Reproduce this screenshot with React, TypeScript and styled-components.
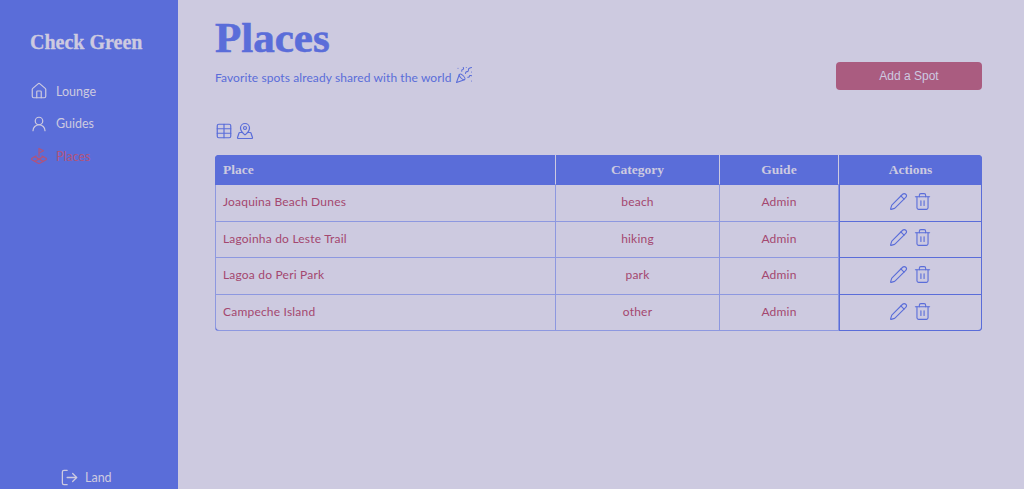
import React from 'react';
import styled, { createGlobalStyle } from 'styled-components';
import { House, UserRound, LandPlot, LogOut, PartyPopper, Table, MapPinned, Pencil, Trash2 } from 'lucide-react';

const BLUE = '#5a6dd9';
const PALE = '#cdcae0';
const ROSE = '#a4476f';
const BODY_FONT = "'Lato', 'Open Sans', sans-serif";
const TITLE_FONT = "'Liberation Serif', 'DejaVu Serif', serif";

const places = [
  { name: 'Joaquina Beach Dunes', category: 'beach', guide: 'Admin' },
  { name: 'Lagoinha do Leste Trail', category: 'hiking', guide: 'Admin' },
  { name: 'Lagoa do Peri Park', category: 'park', guide: 'Admin' },
  { name: 'Campeche Island', category: 'other', guide: 'Admin' },
];

const GlobalStyle = createGlobalStyle`
  html, body {
    margin: 0;
    padding: 0;
    height: 100%;
    background-color: ${PALE};
    font-family: ${BODY_FONT};
  }
`;

const App: React.FC = () => (
  <Page>
    <GlobalStyle />
    <Sidebar>
      <Brand>Check Green</Brand>
      <Nav>
        <NavItem>
          <House size={18} strokeWidth={1.6} />
          Lounge
        </NavItem>
        <NavItem>
          <UserRound size={18} strokeWidth={1.6} />
          Guides
        </NavItem>
        <NavItem $active>
          <LandPlot size={18} strokeWidth={1.6} />
          Places
        </NavItem>
      </Nav>
      <LandLink>
        <LogOut size={19} strokeWidth={1.6} />
        Land
      </LandLink>
    </Sidebar>
    <Main>
      <Title>Places</Title>
      <SubRow>
        <Subtitle>
          Favorite spots already shared with the world
          <PartyPopper size={18} strokeWidth={1.4} />
        </Subtitle>
        <AddButton>Add a Spot</AddButton>
      </SubRow>
      <ViewToggle>
        <Table size={18} strokeWidth={1.6} />
        <MapPinned size={18} strokeWidth={1.6} />
      </ViewToggle>
      <PlacesTable>
        <thead>
          <tr>
            <HeadCell $width={341} $align="left">Place</HeadCell>
            <HeadCell $width={164}>Category</HeadCell>
            <HeadCell $width={119}>Guide</HeadCell>
            <HeadCell>Actions</HeadCell>
          </tr>
        </thead>
        <tbody>
          {places.map((place) => (
            <tr key={place.name}>
              <Cell $align="left">{place.name}</Cell>
              <Cell>{place.category}</Cell>
              <Cell>{place.guide}</Cell>
              <ActionCell>
                <ActionIcons>
                  <Pencil size={19} strokeWidth={1.4} />
                  <Trash2 size={19} strokeWidth={1.4} />
                </ActionIcons>
              </ActionCell>
            </tr>
          ))}
        </tbody>
      </PlacesTable>
    </Main>
  </Page>
);

export default App;

const Page = styled.div`
  display: flex;
  height: 489px;
  overflow: hidden;
`;

const Sidebar = styled.aside`
  width: 178px;
  flex-shrink: 0;
  display: flex;
  flex-direction: column;
  box-sizing: border-box;
  padding: 30px 0 0 30px;
  background-color: ${BLUE};
  color: ${PALE};
`;

const Brand = styled.div`
  font-family: ${TITLE_FONT};
  font-size: 20px;
  font-weight: 700;
  line-height: 24px;
  -webkit-text-stroke: 0.3px ${PALE};
`;

const Nav = styled.nav`
  display: flex;
  flex-direction: column;
  gap: 13.5px;
  margin-top: 27.5px;
`;

const NavItem = styled.div<{ $active?: boolean }>`
  display: flex;
  align-items: center;
  gap: 8px;
  height: 19px;
  font-size: 12.5px;
  color: ${(props) => (props.$active ? '#b0547c' : PALE)};
`;

const LandLink = styled(NavItem)`
  margin-top: auto;
  margin-left: 30px;
  height: 24px;
  gap: 6px;
`;

const Main = styled.main`
  flex: 1;
  min-width: 0;
  box-sizing: border-box;
  padding: 16px 42px 0 37px;
`;

const Title = styled.h1`
  margin: 0;
  font-family: ${TITLE_FONT};
  font-size: 43px;
  font-weight: 700;
  line-height: 44px;
  color: ${BLUE};
  -webkit-text-stroke: 0.6px ${BLUE};
`;

const SubRow = styled.div`
  display: flex;
  align-items: center;
  justify-content: space-between;
  margin-top: 2px;
`;

const Subtitle = styled.p`
  display: flex;
  align-items: center;
  gap: 4px;
  margin: 0;
  padding-top: 3px;
  font-size: 12px;
  letter-spacing: 0.1px;
  color: ${BLUE};

  svg {
    margin-top: -6px;
  }
`;

const AddButton = styled.button`
  width: 146px;
  height: 28px;
  padding: 0;
  border: none;
  border-radius: 4px;
  background-color: #aa5c80;
  color: ${PALE};
  font-family: 'Liberation Sans', sans-serif;
  font-size: 12px;
`;

const ViewToggle = styled.div`
  display: flex;
  gap: 3px;
  margin-top: 32px;
  height: 18px;
  color: ${BLUE};
`;

const PlacesTable = styled.table`
  width: 767px;
  margin-top: 15px;
  border-collapse: separate;
  border-spacing: 0;
  table-layout: fixed;
  border-radius: 4px;
  overflow: hidden;
  box-shadow: inset 0 0 0 1px ${BLUE};
`;

const HeadCell = styled.th<{ $width?: number; $align?: string }>`
  width: ${(props) => (props.$width ? `${props.$width}px` : 'auto')};
  height: 30px;
  box-sizing: border-box;
  padding: 0 8px;
  border-right: 1px solid ${PALE};
  border-bottom: 1px solid ${BLUE};
  background-color: ${BLUE};
  color: ${PALE};
  font-family: ${TITLE_FONT};
  font-size: 13.5px;
  font-weight: 700;
  text-align: ${(props) => props.$align || 'center'};

  &:last-child {
    border-right: none;
  }
`;

const Cell = styled.td<{ $align?: string }>`
  height: 36.6px;
  box-sizing: border-box;
  padding: 0 8px 2px;
  border-right: 1px solid #8d98e0;
  border-bottom: 1px solid #8d98e0;
  color: ${ROSE};
  font-size: 12px;
  letter-spacing: 0.2px;
  text-align: ${(props) => props.$align || 'center'};

  &:first-child {
    border-left: 1px solid #8d98e0;
    padding-left: 7px;
  }
`;

const ActionCell = styled.td`
  box-sizing: border-box;
  padding: 0 0 3px;
  border-bottom: 1px solid ${BLUE};
  border-right: 1px solid ${BLUE};
  box-shadow: inset 1px 0 0 ${BLUE};
  color: ${BLUE};
`;

const ActionIcons = styled.div`
  display: flex;
  align-items: center;
  justify-content: center;
  gap: 5px;
`;
